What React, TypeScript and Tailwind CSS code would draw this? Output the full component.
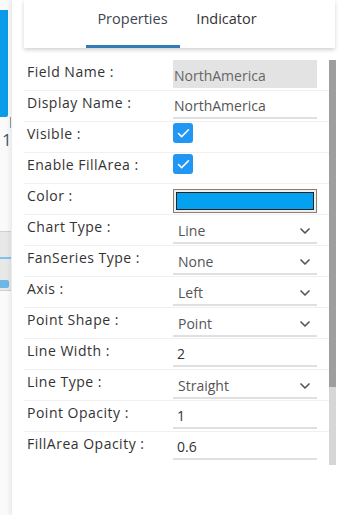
import React, { useState } from "react";
import { ChevronDown, Check } from "lucide-react";

type Row = {
  label: string;
  kind: "readonly" | "text" | "check" | "color" | "select";
  value?: string;
};

const rows: Row[] = [
  { label: "Field Name :", kind: "readonly", value: "NorthAmerica" },
  { label: "Display Name :", kind: "text", value: "NorthAmerica" },
  { label: "Visible :", kind: "check" },
  { label: "Enable FillArea :", kind: "check" },
  { label: "Color :", kind: "color" },
  { label: "Chart Type :", kind: "select", value: "Line" },
  { label: "FanSeries Type :", kind: "select", value: "None" },
  { label: "Axis :", kind: "select", value: "Left" },
  { label: "Point Shape :", kind: "select", value: "Point" },
  { label: "Line Width :", kind: "text", value: "2" },
  { label: "Line Type :", kind: "select", value: "Straight" },
  { label: "Point Opacity :", kind: "text", value: "1" },
  { label: "FillArea Opacity :", kind: "text", value: "0.6" },
];

const Field = ({ row }: { row: Row }) => {
  if (row.kind === "readonly") {
    return (
      <div className="flex h-[28px] w-[144px] items-end bg-[#e3e3e3] pb-[2px] pl-[1px] leading-[20px] text-[#666]">
        {row.value}
      </div>
    );
  }
  if (row.kind === "text") {
    return (
      <div className="flex h-[28px] w-[144px] items-end border-b-2 border-[#e0e0e0] pb-px pl-[1px] leading-[20px] text-[#333]">
        {row.value === "NorthAmerica" ? (
          <span className="text-[#555]">{row.value}</span>
        ) : (
          <span className="pl-[3px]">{row.value}</span>
        )}
      </div>
    );
  }
  if (row.kind === "check") {
    return (
      <div className="pt-px">
        <div className="flex h-[20px] w-[20px] items-center justify-center rounded-[3px] bg-[#2196f3]">
          <Check size={15} strokeWidth={2.5} color="#fff" />
        </div>
      </div>
    );
  }
  if (row.kind === "color") {
    return (
      <div className="pt-[5px]">
        <div className="h-[24px] w-[144px] border border-[#8d7d6d] bg-[#efefef] p-[2px]">
          <div className="h-full w-full border border-[#222] bg-[#03a1ef]" />
        </div>
      </div>
    );
  }
  return (
    <div className="flex h-[29px] w-[144px] items-end justify-between border-b-2 border-[#e0e0e0] pb-px pl-[5px] pr-[4px] leading-[20px] text-[#555]">
      <span>{row.value}</span>
      <ChevronDown size={16} strokeWidth={2.5} color="#555" className="mb-[2px]" />
    </div>
  );
};

const App = () => {
  const [tab, setTab] = useState("Properties");

  return (
    <div
      className="flex h-[515px] w-[345px] overflow-hidden bg-white text-[14px]"
      style={{ fontFamily: '"Open Sans", "Noto Sans", sans-serif' }}
    >
      {/* background canvas behind panel */}
      <div className="flex w-[11px] shrink-0 flex-col bg-[#fafafa]">
        <div className="mt-[10px] h-[107px] w-[8px] rounded-br-[2px] bg-[#0a9be9]" />
        <div className="ml-[10px] h-[11px] w-px bg-[#999]" />
        <div className="pl-[2px] pt-[2px] text-[17px] leading-[20px] text-[#4a5568]">1</div>
        <div className="mt-[81px] flex h-[60px] flex-col border-y border-[#cfcfcf] bg-[#e8e8e8]">
          <div className="mt-[25px] h-[2px] bg-[#7cc3ec]" />
          <div className="mt-[21px] h-[8px] w-[9px] rounded-r-[2px] bg-[#6db8e6]" />
        </div>
      </div>

      {/* panel */}
      <div className="flex flex-1 flex-col border-l border-[#ececec] bg-white shadow-[-2px_0_4px_rgba(0,0,0,0.06)]">
        <div className="ml-[12px] mr-[10px] flex h-[48px] justify-center bg-white shadow-[0_2px_4px_rgba(0,0,0,0.18)]">
          {["Properties", "Indicator"].map((t) => (
            <button
              key={t}
              onClick={() => setTab(t)}
              className={`flex h-full w-[94px] flex-col items-center justify-between pt-[8px] text-[14.5px] ${
                tab === t ? "text-[#3d4550]" : "text-[#333]"
              }`}
            >
              <span>{t}</span>
              <span className={`h-[3px] w-full ${tab === t ? "bg-[#337ab7]" : "bg-transparent"}`} />
            </button>
          ))}
        </div>

        <div className="ml-[12px] mt-[12px] flex">
          <div className="flex w-[305px] flex-col">
            {rows.map((row) => (
              <div key={row.label} className="flex h-[31px] border-b border-[#f0f0f0] last:border-b-0">
                <div className="w-[149px] pl-[3px] pt-[2px] leading-[20px] tracking-[0.5px] text-[#333]">
                  {row.label}
                </div>
                <Field row={row} />
              </div>
            ))}
          </div>
          <div className="flex h-[405px] w-[7px] flex-col bg-[#d6d6d6]">
            <div className="h-[327px] bg-[#9e9e9e]" />
          </div>
        </div>
      </div>
    </div>
  );
};

export default App;
